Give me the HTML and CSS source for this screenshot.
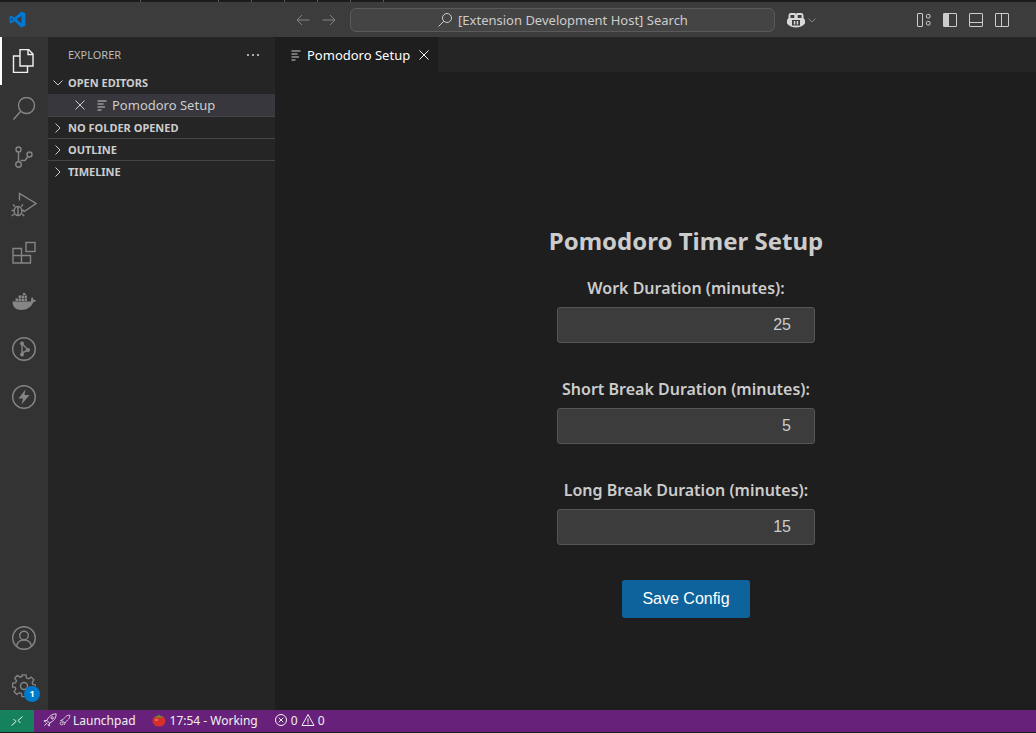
FILE: index.html
```html
<!DOCTYPE html>
<html lang="en">
<head>
    <meta charset="UTF-8">
    <title>Pomodoro Setup</title>
    <link rel="stylesheet" href="styles.css">
</head>
<body>
    <div class="topstrip">
        <span class="tick first"></span>
        <span class="tick second"></span>
        <span class="tick"></span>
        <span class="tick"></span>
        <span class="tick"></span>
        <span class="tick"></span>
        <span class="tick"></span>
    </div>

    <header class="titlebar">
        <svg class="logo" width="17" height="17" viewBox="0 0 24 24"><path fill="#0078d4" d="M17.5 0.6 23.2 3.3V20.7L17.5 23.4 7.6 14.4 3.1 17.8 0.8 16.6V7.4L3.1 6.2 7.6 9.6ZM17.5 6.6 10.9 12 17.500 17.4ZM3 9.2V14.8L5.8 12Z"/></svg>
        <div class="nav-arrows">
            <svg width="16" height="16" viewBox="0 0 16 16"><path class="ln dim" d="M14.5 8H2M7 3 2 8l5 5"/></svg>
            <svg width="16" height="16" viewBox="0 0 16 16"><path class="ln dim" d="M1.5 8H14M9 3l5 5-5 5"/></svg>
        </div>
        <div class="searchbox">
            <svg width="16" height="16" viewBox="0 0 16 16"><circle class="ln" cx="10" cy="6" r="4.5"/><path class="ln" d="M6.8 9.2 1.5 14.5"/></svg>
            <span>[Extension Development Host] Search</span>
        </div>
        <div class="copilot">
            <svg width="18" height="16" viewBox="0 0 18 16"><path fill="#d8d8d8" d="M4 1h3.5C8.400 1 9 1.700 9 2.500 9 1.700 9.600 1 10.500 1H14c1.700 0 2.500 1.200 2.500 2.800V6L18 8v3.500C16 14 12.500 15.500 9 15.500S2 14 0 11.500V8l1.500-2V3.800C1.500 2.200 2.300 1 4 1Z"/><path fill="#3c3c3c" d="M3.500 3h3.800v3H3.500ZM10.700 3h3.800v3h-3.800ZM5 8h8v5.500H5Z"/><path fill="#d8d8d8" d="M6.800 9h1.500v3.500H6.800ZM9.700 9h1.500v3.500H9.700Z"/></svg>
            <svg width="10" height="10" viewBox="0 0 10 10"><path class="ln dim" d="M1.500 3.500 5 7l3.500-3.500"/></svg>
        </div>
        <div class="layout-btns">
            <svg width="16" height="16" viewBox="0 0 16 16"><rect class="ln" x="1.500" y="1.500" width="5" height="13" rx=".5"/><rect class="ln" x="10.500" y="2.500" width="3.500" height="3.500" rx="1"/><rect class="ln" x="10.500" y="9.500" width="3.500" height="3.500" rx="1"/></svg>
            <svg width="16" height="16" viewBox="0 0 16 16"><rect class="ln" x="1.500" y="1.500" width="13" height="13" rx=".5"/><rect x="1.500" y="1.500" width="5.500" height="13" fill="#ccc"/></svg>
            <svg width="16" height="16" viewBox="0 0 16 16"><rect class="ln" x="1.500" y="1.500" width="13" height="13" rx=".5"/><path class="ln" d="M1.500 10.500h13"/></svg>
            <svg width="16" height="16" viewBox="0 0 16 16"><rect class="ln" x="1.500" y="1.500" width="13" height="13" rx=".5"/><path class="ln" d="M7.500 1.500v13"/></svg>
        </div>
    </header>

    <div class="workbench">
        <nav class="activitybar">
            <div class="act-item active">
                <svg width="24" height="24" viewBox="0 0 24 24"><path class="ln bright" d="M8 .5h8.500l4.500 4.500v12H8ZM16 .5V5.500h5"/><path class="ln bright" d="M8 7H1.500v16.500h14V17"/></svg>
            </div>
            <div class="act-item">
                <svg width="24" height="24" viewBox="0 0 24 24"><circle class="ln" cx="14.500" cy="8.500" r="8"/><path class="ln" d="M8.700 14.300 1.500 22.500"/></svg>
            </div>
            <div class="act-item">
                <svg width="24" height="24" viewBox="0 0 24 24"><circle class="ln" cx="6.500" cy="4.500" r="2.500"/><circle class="ln" cx="6.500" cy="19.500" r="2.800"/><circle class="ln" cx="17.500" cy="9.500" r="2.500"/><path class="ln" d="M6.500 7v10M8.500 15.500h4.500l3-4"/></svg>
            </div>
            <div class="act-item">
                <svg width="26" height="26" viewBox="0 0 26 26"><path class="ln" d="M8.500 8.500V1.500L25 11.500 12.500 20"/><ellipse class="ln" cx="7" cy="19" rx="3.800" ry="4.500"/><path class="ln" d="M3.200 18.500H.5M3.200 22l-2.500 2M10.800 18.500h2.500M10.800 22l2.500 2M7 14.500v9M4 14.500 2 12.500M10 14.500l2-2"/></svg>
            </div>
            <div class="act-item">
                <svg width="24" height="24" viewBox="0 0 24 24"><path class="ln" d="M1 7.500h8.500V22H1ZM1 14.500h17.500V22H9.500M9.500 7.500v7"/><rect class="ln" x="14" y="1.500" width="9" height="9"/></svg>
            </div>
            <div class="act-item">
                <svg width="24" height="24" viewBox="0 0 24 24"><path fill="#858585" d="M.5 12.500h18.500c-.3-1.500.2-3.500 1-4.500 1 .8 1.500 2 1.500 2.800.8-.2 1.800-.1 2.500.5-.5 1.200-1.500 1.800-2.800 2C19.500 18 15 21 9.500 21 3.500 21 .5 17.500 .5 12.500Z"/><path fill="#858585" d="M3.500 9.500H6V12H3.500ZM6.500 9.500H9V12H6.500ZM9.500 9.500H12V12H9.500ZM12.500 9.500H15V12H12.500ZM6.500 6.500H9V9H6.500ZM9.500 6.500H12V9H9.500ZM12.500 6.500H15V9H12.500ZM11 4H13.500V6H11Z"/></svg>
            </div>
            <div class="act-item">
                <svg width="24" height="24" viewBox="0 0 24 24"><circle class="ln" cx="12" cy="12" r="11.300"/><path class="ln" d="M10 6.500v11M10 6.500l6 6.500-6 3"/><circle cx="10" cy="6.500" r="2" fill="#858585"/><circle cx="10" cy="17.500" r="2" fill="#858585"/><circle cx="16" cy="13" r="2" fill="#858585"/></svg>
            </div>
            <div class="act-item">
                <svg width="24" height="24" viewBox="0 0 24 24"><circle class="ln" cx="12" cy="12" r="11.300"/><path fill="#858585" d="M13.500 4.500 6.500 13.500H11L9.500 19.500 17.500 10H12.500Z"/></svg>
            </div>
            <div class="act-spacer"></div>
            <div class="act-item">
                <svg width="24" height="24" viewBox="0 0 24 24"><circle class="ln" cx="12" cy="12" r="11.300"/><circle class="ln" cx="12" cy="9.500" r="4.300"/><path class="ln" d="M4.500 20c1-4 4-6 7.500-6s6.500 2 7.500 6"/></svg>
            </div>
            <div class="act-item gear">
                <svg width="24" height="24" viewBox="0 0 24 24"><path class="ln" d="M10 1h4l.7 3.300 2 .9 2.900-1.800 2.800 2.800-1.800 2.900.9 2 3.300.7v3.800l-3.300.7-.9 2 1.800 2.900-2.800 2.800-2.900-1.800-2 .9L14 24h-4l-.7-3.300-2-.9-2.900 1.800-2.800-2.800 1.800-2.900-.9-2L-.1 13.800V10l3.300-.7.900-2-1.800-2.900 2.800-2.800 2.900 1.800 2-.9Z" transform="translate(.6 -.1) scale(.95)"/><circle class="ln" cx="12" cy="12" r="3.500"/></svg>
                <span class="badge">1</span>
            </div>
        </nav>

        <aside class="sidebar">
            <div class="side-title">
                <span>EXPLORER</span>
                <span class="more">
                    <svg width="16" height="16" viewBox="0 0 16 16"><circle cx="3" cy="8" r="1.100" fill="#ccc"/><circle cx="8" cy="8" r="1.100" fill="#ccc"/><circle cx="13" cy="8" r="1.100" fill="#ccc"/></svg>
                </span>
            </div>
            <div class="sec-head open">
                <svg width="16" height="16" viewBox="0 0 16 16"><path class="ln" d="M3.500 5.500 8 10l4.500-4.500"/></svg>
                OPEN EDITORS
            </div>
            <div class="editor-row">
                <svg class="row-x" width="16" height="16" viewBox="0 0 16 16"><path class="ln" d="M3.500 3.500l9 9M12.500 3.500l-9 9"/></svg>
                <svg class="row-doc" width="14" height="14" viewBox="0 0 14 14"><path class="ln" d="M2.500 3h9M2.500 6h6M2.500 9h7.500M2.500 12h4"/></svg>
                Pomodoro Setup
            </div>
            <div class="sec-head ruled">
                <svg width="16" height="16" viewBox="0 0 16 16"><path class="ln" d="M5.500 3.500 10 8l-4.500 4.500"/></svg>
                NO FOLDER OPENED
            </div>
            <div class="sec-head ruled">
                <svg width="16" height="16" viewBox="0 0 16 16"><path class="ln" d="M5.500 3.500 10 8l-4.500 4.500"/></svg>
                OUTLINE
            </div>
            <div class="sec-head ruled">
                <svg width="16" height="16" viewBox="0 0 16 16"><path class="ln" d="M5.500 3.500 10 8l-4.500 4.500"/></svg>
                TIMELINE
            </div>
        </aside>

        <main class="editor">
            <div class="tabs">
                <div class="tab">
                    <svg width="14" height="14" viewBox="0 0 14 14"><path class="ln" d="M2.500 3h9M2.500 6h6M2.500 9h7.500M2.500 12h4"/></svg>
                    <span>Pomodoro Setup</span>
                    <svg class="tab-x" width="16" height="16" viewBox="0 0 16 16"><path class="ln bright" d="M3.500 3.500l9 9M12.500 3.500l-9 9"/></svg>
                </div>
            </div>
            <div class="webview">
                <form class="setup">
                    <h1>Pomodoro Timer Setup</h1>
                    <label>Work Duration (minutes):</label>
                    <div class="num">25</div>
                    <label>Short Break Duration (minutes):</label>
                    <div class="num">5</div>
                    <label>Long Break Duration (minutes):</label>
                    <div class="num">15</div>
                    <button type="button">Save Config</button>
                </form>
            </div>
        </main>
    </div>

    <footer class="statusbar">
        <div class="remote">
            <svg width="14" height="14" viewBox="0 0 14 14"><path class="ln bright" d="M1.500 11.500 6 7.500 3.500 5M12.500 2.500 8 6.500l2.500 2.500"/></svg>
        </div>
        <div class="st-item launch">
            <svg width="14" height="14" viewBox="0 0 16 16"><path class="ln bright" d="M15 1C10 1 6.500 4 4.500 8.500l3 3C12 9.500 15 6 15 1ZM4.500 8.500 1 9l2.500 1.500M7.500 11.500 7 15l-1.500-2.500M5 11l-3.500 3.500"/><circle class="ln bright" cx="10.500" cy="5.500" r="1.300"/></svg>
            <svg width="12" height="12" viewBox="0 0 16 16"><path class="ln bright" d="M14.500 1.500c-3 0-5 1-6.500 3L4 8.500l3.500 3.500 4-4c2-1.500 3-3.500 3-6.500ZM5 7.500 1.500 9M8.500 11 7 14.500"/><circle class="ln bright" cx="3.500" cy="12.500" r="2"/></svg>
            <span>Launchpad</span>
        </div>
        <div class="st-item pomo">
            <svg width="14" height="14" viewBox="0 0 14 14"><ellipse cx="7" cy="8" rx="6.500" ry="5.500" fill="#d6302a"/><ellipse cx="4.500" cy="7" rx="1.500" ry="1" fill="#f0756a"/><path fill="#5c9a33" d="M3 3 6 3.400 7 1 8 3.400 11 3 9 5 7 4.200 5 5Z"/></svg>
            <span>17:54 - Working</span>
        </div>
        <div class="st-item problems">
            <svg width="14" height="14" viewBox="0 0 14 14"><circle class="ln bright" cx="7" cy="7" r="5.500"/><path class="ln bright" d="M4.800 4.800l4.400 4.400M9.200 4.800 4.800 9.200"/></svg>
            <span>0</span>
            <svg width="14" height="14" viewBox="0 0 14 14"><path class="ln bright" d="M7 1.500 13 12.500H1ZM7 5.500v4M7 10.200v1"/></svg>
            <span>0</span>
        </div>
    </footer>
    <div class="bottomstrip"></div>
</body>
</html>
```

FILE: styles.css
```css
/* page frame */
* {
    box-sizing: border-box;
}

html, body {
    height: 100%;
}

body {
    margin: 0;
    display: flex;
    flex-direction: column;
    overflow: hidden;
    background-color: #1e1e1e;
    color: #ccc;
    font-family: "Noto Sans", sans-serif;
    font-size: 13px;
}

svg {
    display: block;
    flex-shrink: 0;
}

/* shared stroke styles for the icons */
.ln {
    fill: none;
    stroke: #ccc;
    stroke-width: 1;
}

.ln.dim {
    stroke: #858585;
}

.ln.bright {
    stroke: #f0f0f0;
}

.activitybar .ln {
    stroke-width: 1.4;
}

.activitybar .ln:not(.bright) {
    stroke: #858585;
}

.topstrip {
    height: 2px;
    display: flex;
    background-color: #1c1c1c;
}

.tick {
    width: 33px;
    border-right: 1px solid #5a5a5a;
}

.tick.first {
    width: 141px;
}

.tick.second {
    width: 78px;
}

/* title bar */
.titlebar {
    height: 35px;
    display: flex;
    align-items: center;
    background-color: #3c3c3c;
    padding-left: 9px;
}

.nav-arrows {
    display: flex;
    gap: 10px;
    margin-left: 269px;
}

.searchbox {
    width: 425px;
    height: 24px;
    margin-left: 13px;
    display: flex;
    align-items: center;
    justify-content: center;
    gap: 5px;
    background-color: #444;
    border: 1px solid #5a5a5a;
    border-radius: 6px;
    color: #ccc;
}

.copilot {
    display: flex;
    align-items: center;
    gap: 2px;
    margin-left: 12px;
}

.layout-btns {
    display: flex;
    gap: 10px;
    margin-left: 99px;
}

/* main area */
.workbench {
    flex: 1;
    display: flex;
    min-height: 0;
}

.activitybar {
    width: 48px;
    display: flex;
    flex-direction: column;
    background-color: #333;
}

.act-item {
    height: 48px;
    display: flex;
    align-items: center;
    justify-content: center;
    position: relative;
}

.act-item.active {
    box-shadow: inset 2px 0 0 #fff;
}

.act-spacer {
    flex: 1;
}

.badge {
    position: absolute;
    right: 8px;
    bottom: 8px;
    width: 16px;
    height: 16px;
    border-radius: 50%;
    background-color: #007acc;
    color: #fff;
    font-size: 9px;
    font-weight: 700;
    line-height: 16px;
    text-align: center;
}

.sidebar {
    width: 227px;
    background-color: #252526;
}

.side-title {
    height: 35px;
    padding: 0 14px 0 20px;
    display: flex;
    align-items: center;
    justify-content: space-between;
    font-size: 11px;
    color: #bbb;
}

.sec-head {
    height: 22px;
    display: flex;
    align-items: center;
    gap: 2px;
    padding-left: 2px;
    font-size: 11px;
    font-weight: 700;
    color: #ccc;
}

.sec-head.open {
    padding-bottom: 1px;
}

.sec-head.ruled {
    border-top: 1px solid #454545;
}

.editor-row {
    height: 22px;
    display: flex;
    align-items: center;
    padding-left: 24px;
    background-color: #37373d;
    color: #ccc;
}

.row-doc {
    margin: 0 3px 0 7px;
}

/* editor */
.editor {
    flex: 1;
    display: flex;
    flex-direction: column;
    min-width: 0;
}

.tabs {
    height: 35px;
    display: flex;
    background-color: #252526;
}

.tab {
    width: 163px;
    display: flex;
    align-items: center;
    padding-left: 14px;
    background-color: #1e1e1e;
    color: #fff;
}

.tab span {
    margin-left: 4px;
}

.tab-x {
    margin-left: 6px;
}

.webview {
    flex: 1;
    display: flex;
    justify-content: center;
    padding: 152px 0 0 61px;
}

.setup {
    width: 300px;
    display: flex;
    flex-direction: column;
    align-items: center;
    margin: 0;
}

h1 {
    margin: 0 0 20px;
    font-size: 24px;
    line-height: 33px;
    font-weight: 700;
    color: #ccc;
}

label {
    font-size: 16px;
    font-weight: 600;
    line-height: 22px;
    margin-bottom: 8px;
}

.num {
    width: 258px;
    height: 36px;
    margin-bottom: 35px;
    padding-right: 23px;
    background-color: #3c3c3c;
    border: 1px solid #555;
    border-radius: 3px;
    font-family: "Liberation Sans", sans-serif;
    font-size: 16px;
    line-height: 34px;
    text-align: right;
}

button {
    width: 128px;
    height: 38px;
    border: none;
    border-radius: 3px;
    background-color: #0e639c;
    color: #fff;
    font-family: "Liberation Sans", sans-serif;
    font-size: 16px;
}

/* status bar */
.statusbar {
    height: 22px;
    display: flex;
    align-items: center;
    background-color: #68217a;
    color: #f0f0f0;
    font-size: 12px;
}

.bottomstrip {
    height: 1px;
    background-color: #1c1c1c;
}

.remote {
    width: 34px;
    height: 100%;
    display: flex;
    align-items: center;
    justify-content: center;
    background-color: #16825d;
}

.st-item {
    display: flex;
    align-items: center;
    gap: 3px;
    margin-left: 9px;
    padding-bottom: 2px;
}

.st-item.launch {
    gap: 2px;
}

.st-item.pomo {
    gap: 4px;
    margin-left: 16px;
}

.st-item.problems {
    margin-left: 16px;
}
```
